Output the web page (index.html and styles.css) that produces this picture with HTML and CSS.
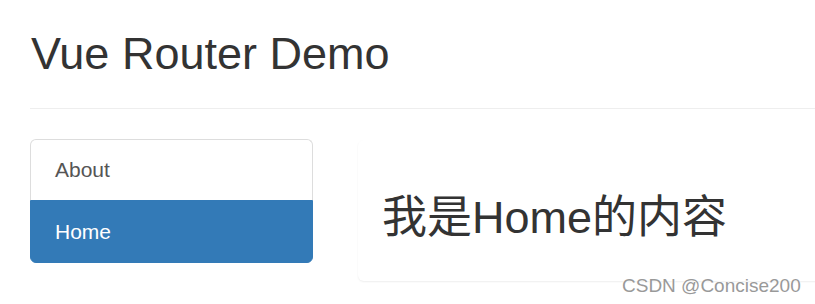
FILE: index.html
```html
<!DOCTYPE html>
<html lang="zh">
<head>
<meta charset="utf-8">
<title>Vue Router Demo</title>
<link rel="stylesheet" href="styles.css">
</head>
<body>
<div class="page">
  <div class="page-header">
    <h2 class="title">Vue Router Demo</h2>
  </div>
  <div class="row">
    <div class="list-group">
      <a class="list-group-item">About</a>
      <a class="list-group-item active">Home</a>
    </div>
    <div class="panel">
      <div class="panel-body">
        <h2 class="content">我是Home的内容</h2>
      </div>
    </div>
  </div>
  <div class="watermark">CSDN @Concise200</div>
</div>
</body>
</html>
```
FILE: styles.css
```css
html, body {
  margin: 0;
  padding: 0;
  overflow: hidden;
  background: #fff;
}
body {
  font-family: "Liberation Sans", Arial, "Noto Sans CJK SC", sans-serif;
  color: #333;
  width: 815px;
  height: 304px;
}
.page {
  position: relative;
  padding-left: 30px;
  height: 304px;
}
.page-header {
  border-bottom: 1px solid #eee;
  padding-top: 29px;
  padding-bottom: 29px;
  margin-right: -20px;
}
.title {
  margin: 0;
  padding-left: 1px;
  font-size: 45px;
  line-height: 49.5px;
  font-weight: 500;
  color: #333;
}
.row {
  display: flex;
  align-items: flex-start;
  gap: 45px;
  margin-top: 30px;
}
.list-group {
  display: flex;
  flex-direction: column;
  width: 283px;
  flex: none;
}
.list-group-item {
  display: block;
  padding: 15px 24px 15px 24px;
  font-size: 21px;
  line-height: 30px;
  color: #555;
  background: #fff;
  border: 1px solid #ddd;
  border-bottom: none;
  border-radius: 6px 6px 0 0;
  text-decoration: none;
}
.list-group-item.active {
  color: #fff;
  background: #337ab7;
  border-color: #337ab7;
  border-bottom: 1px solid #337ab7;
  border-radius: 0 0 6px 6px;
  padding-top: 16px;
}
.panel {
  flex: none;
  width: 500px;
  margin-top: 1px;
  background: #fff;
  border: 1px solid transparent;
  border-radius: 6px;
  box-shadow: 0 1px 2px rgba(0, 0, 0, 0.07);
}
.panel-body {
  padding: 22.5px 22.5px 22.5px 23px;
}
.content {
  margin: 30px 0 15px;
  font-size: 45px;
  line-height: 49.5px;
  font-weight: 400;
  color: #333;
  font-family: "Liberation Sans", Arial, "Noto Sans CJK SC", sans-serif;
}
.watermark {
  position: absolute;
  left: 622px;
  top: 275px;
  font-size: 19px;
  line-height: 22px;
  color: #999;
  text-shadow: 0 0 2px #fff, 0 0 2px #fff;
  font-family: "Liberation Sans", Arial, sans-serif;
}
```
